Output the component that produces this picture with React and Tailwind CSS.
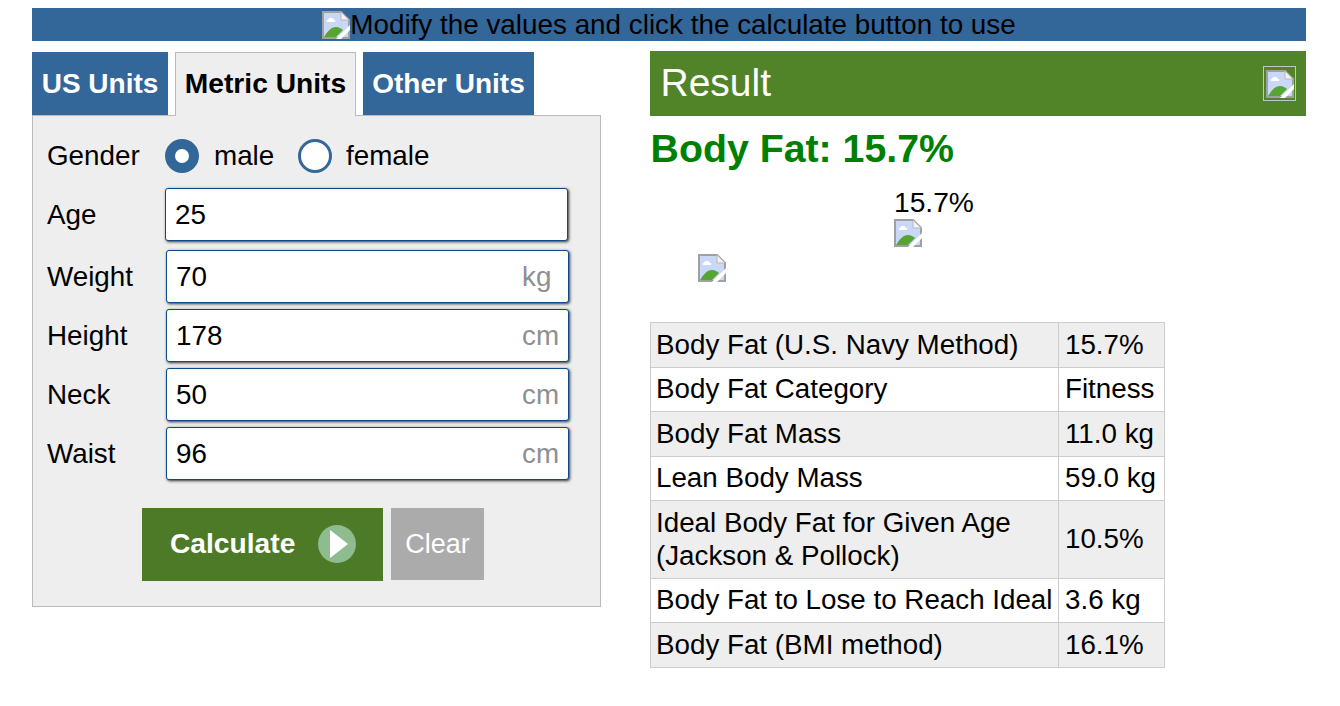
import React from 'react';

/* Chrome's broken image glyph */
const BrokenImage = ({ className }) => (
  <svg className={className} viewBox="0 0 28 28" xmlns="http://www.w3.org/2000/svg">
    <path d="M1 1H19L27 9V27H1Z" fill="#c8d8f6" stroke="#a0a0a0" strokeWidth="2" />
    <path d="M19 1V9H27Z" fill="#f2f2f2" stroke="#b8b8b8" strokeWidth="1" />
    <path d="M6 9C7 6 11 6 12 9C14 9 14 11 12 11H6C4 11 4 9 6 9Z" fill="#fff" />
    <path d="M2 26C5 21 9 16 14 16C17 16 20 18 21 19L14 26Z" fill="#56a432" />
    <path d="M14 28L28 14V19L19 28Z" fill="#fff" />
  </svg>
);

const fields = [
  { label: 'Weight', value: '70', unit: 'kg' },
  { label: 'Height', value: '178', unit: 'cm' },
  { label: 'Neck', value: '50', unit: 'cm' },
  { label: 'Waist', value: '96', unit: 'cm' },
];

const results = [
  ['Body Fat (U.S. Navy Method)', '15.7%', 'h-[45px]'],
  ['Body Fat Category', 'Fitness', 'h-[44px]'],
  ['Body Fat Mass', '11.0 kg', 'h-[45px]'],
  ['Lean Body Mass', '59.0 kg', 'h-[44px]'],
  ['Ideal Body Fat for Given Age (Jackson & Pollock)', '10.5%', 'h-[78px]'],
  ['Body Fat to Lose to Reach Ideal', '3.6 kg', 'h-[44px]'],
  ['Body Fat (BMI method)', '16.1%', 'h-[45px]'],
];

const inputClass =
  'flex h-[53px] w-[403px] items-center justify-between rounded-[3px] border border-[#0b4a8c] bg-white pl-[9px] pr-[16px] shadow-[1px_1px_3px_#333]';

export default function App() {
  return (
    <div className="min-h-[706px] bg-white pt-[8px] pl-[32px] pr-[34px] font-['Liberation_Sans',Arial,sans-serif] text-black">
      {/* Top banner */}
      <div className="flex h-[33px] items-center justify-center bg-[#336699] text-[27.85px] leading-[33px]">
        <BrokenImage className="h-[28px] w-[28px] shrink-0" />
        <span>Modify the values and click the calculate button to use</span>
      </div>

      <div className="mt-[10px] flex gap-[49px]">
        {/* Calculator form */}
        <div className="w-[569px] shrink-0">
          <div className="flex h-[64px] items-end">
            <div className="mt-[1px] flex h-[63px] w-[136px] items-center justify-center bg-[#336699] text-[28px] font-bold text-white">US Units</div>
            <div className="relative z-10 ml-[7px] mb-[-1px] flex h-[64px] w-[181px] items-center justify-center border border-b-0 border-[#bbbbbb] bg-[#eeeeee] pb-[2px] text-[28.2px] font-bold">Metric Units</div>
            <div className="ml-[7px] flex h-[63px] w-[171px] items-center justify-center bg-[#336699] text-[28px] font-bold text-white">Other Units</div>
          </div>
          <div className="h-[492px] border border-[#bbbbbb] bg-[#eeeeee] pl-[14px] pt-[22px] text-[27.8px]">
            <div className="flex h-[36px] items-center">
              <span className="w-[118px]">Gender</span>
              <span className="flex h-[34px] w-[34px] items-center justify-center rounded-full bg-[#336699]">
                <span className="h-[14px] w-[14px] rounded-full bg-white" />
              </span>
              <span className="ml-[15px] w-[84px]">male</span>
              <span className="h-[34px] w-[34px] rounded-full border-[3px] border-[#336699] bg-white" />
              <span className="ml-[14px]">female</span>
            </div>
            <div className="mt-[14px] flex items-center">
              <span className="w-[118px]">Age</span>
              <div className={inputClass}>25</div>
            </div>
            {fields.map((f, i) => (
              <div key={f.label} className={`flex items-center ${i === 0 ? 'mt-[9px]' : 'mt-[6px]'}`}>
                <span className="w-[119px]">{f.label}</span>
                <div className={inputClass}>
                  <span>{f.value}</span>
                  {/* units share a left edge, so cm sticks out further than kg */}
                  <span className="w-[30px] whitespace-nowrap text-[#8f8f8f]">{f.unit}</span>
                </div>
              </div>
            ))}
            <div className="mt-[28px] ml-[95px] flex items-start gap-[8px]">
              <div className="flex h-[73px] w-[241px] items-center bg-[#4c7a27] pb-[2px] pl-[28px] text-[28.2px] font-bold text-white">
                Calculate
                <span className="ml-[23px] flex h-[38px] w-[38px] items-center justify-center rounded-full bg-[#8fbc8f]">
                  <svg className="ml-[3px] h-[28px] w-[18px]" viewBox="0 0 18 28">
                    <path d="M0 0L18 14L0 28Z" fill="#fff" />
                  </svg>
                </span>
              </div>
              <div className="flex h-[72px] w-[93px] items-center justify-center bg-[#ababab] text-[27px] text-white">Clear</div>
            </div>
          </div>
        </div>

        {/* Results */}
        <div className="min-w-0 flex-1">
          <div className="flex h-[65px] items-center justify-between bg-[#518329] pl-[10.5px] pr-[10px] text-[39px] text-white">
            <span>Result</span>
            <span className="flex h-[35px] w-[33px] items-center justify-center border border-[#c4c4c4]">
              <BrokenImage className="h-[28px] w-[28px]" />
            </span>
          </div>
          <div className="mt-[10px] h-[44px] pl-[0.5px] text-[39.3px] font-bold leading-[44px] text-[#008000]">Body Fat: 15.7%</div>
          <div className="h-[152px] pt-[17px]">
            <div className="ml-[244px] text-[28.2px] leading-[30px]">15.7%</div>
            <BrokenImage className="ml-[244px] mt-[2px] h-[28px] w-[28px]" />
            <BrokenImage className="ml-[48px] mt-[7px] h-[28px] w-[28px]" />
          </div>
          <table className="border-collapse text-[27.75px] leading-[33px]">
            <tbody>
              {results.map(([label, value, rowHeight], i) => (
                <tr key={label} className={`${rowHeight} ${i % 2 === 0 ? 'bg-[#eeeeee]' : 'bg-white'}`}>
                  <td className="w-[408px] border border-[#cccccc] pb-[2px] pl-[5px] pr-0 pt-0">{label}</td>
                  <td className="w-[106px] whitespace-nowrap border border-[#cccccc] pb-[2px] pl-[6px] pr-0 pt-0">{value}</td>
                </tr>
              ))}
            </tbody>
          </table>
        </div>
      </div>
    </div>
  );
}
